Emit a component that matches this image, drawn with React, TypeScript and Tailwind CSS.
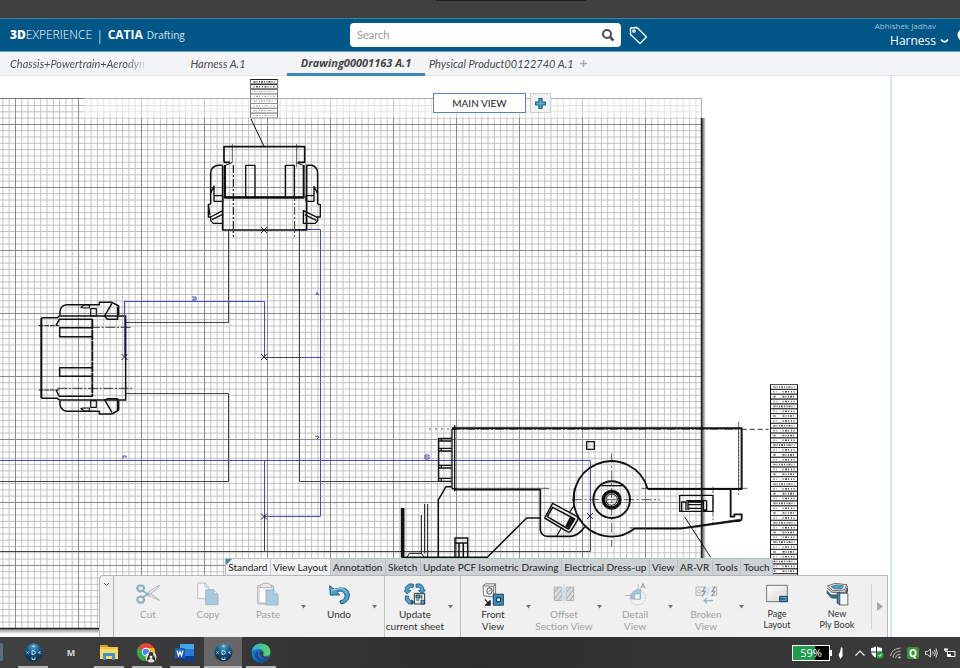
import type { ReactNode } from "react";

const MINOR_X = Array.from({ length: 112 }, (_, i) => 2.9 + i * 6.3).filter((x) => x < 701);
const MINOR_Y = Array.from({ length: 84 }, (_, i) => 105.5 + i * 6.3).filter((y) => y < 627);
const MAJOR_X = Array.from({ length: 11 }, (_, i) => 15.5 + i * 63);
const MAJOR_Y = Array.from({ length: 9 }, (_, i) => 124.5 + i * 63);

function Cross({ x, y }: { x: number; y: number }) {
  return <path d={`M${x - 3} ${y - 3}l6 6m0-6l-6 6`} stroke="#222" strokeWidth="1" />;
}

function SheetGrid() {
  return (
    <g>
      <rect x="0" y="628" width="705" height="6" fill="url(#shadowY)" />
      <rect x="702" y="118" width="4" height="514" fill="url(#shadowX)" />
      <rect x="-2" y="98" width="704" height="530" fill="#fff" />
      <g stroke="#c2c2c2" strokeWidth="1">
        {MINOR_X.map((x) => (
          <path key={x} d={`M${x} 99V628`} />
        ))}
        {MINOR_Y.map((y) => (
          <path key={y} d={`M0 ${y}H702`} />
        ))}
      </g>
      <g stroke="#8b8b8b" strokeWidth="1">
        {MAJOR_X.map((x) => (
          <path key={x} d={`M${x} 99V628`} />
        ))}
        {MAJOR_Y.map((y) => (
          <path key={y} d={`M0 ${y}H702`} />
        ))}
      </g>
      <rect x="84" y="99" width="617" height="19" fill="#fff" opacity=".55" />
      <path d="M84 98.500H702M701.500 98V118" stroke="#b0b0b0" />
      <path d="M0 98.500H84" stroke="#777" />
      <path d="M701.500 118V628.500H0" stroke="#222" strokeWidth="1.500" fill="none" />
    </g>
  );
}

function Wires() {
  return (
    <g fill="none">
      <g stroke="#444">
        <path d="M125 322.500H228.500V230M125 393.500H228.500V481.500H0M299.500 230V481.500H440M264 357.500H299M264.500 516V552M0 551.500H590.500V516" />
      </g>
      <g stroke="#4a4ab8">
        <path d="M124.500 357V301.500H264.500V357M294 229.500H320.500V516.500H264.500V460.500M299 357.500H322M0 460.500H590.500V516" />
        <path d="M192 297h4v3h-4m1-1l2 0M316 293l3 2m-3 0l2-3M315 436l4 1-2 2M123 459v-3h3v2M425 459v-4h4v4zm0-2h3" />
      </g>
      <Cross x={264} y={230} />
      <Cross x={264} y={357} />
      <Cross x={124.5} y={357} />
      <Cross x={264} y={516.5} />
      <Cross x={590} y={516} />
    </g>
  );
}

function TopConnector() {
  return (
    <g transform="translate(190 70) scale(.3333)" fill="none" stroke="#111" strokeWidth="4.500" strokeLinejoin="round">
      <path d="M183 147L222 229" strokeWidth="3" />
      <path d="M102 277V230H344V280M102 277H120M344 277H324M98 287V480H350V287" strokeWidth="5" />
      <path d="M105 285V383H341V285" strokeWidth="6" />
      <path d="M104 380H344" strokeWidth="3" />
      <path d="M102 288L126 278M344 288L320 278" strokeWidth="3" />
      <path d="M167 380V286H195V380M286 380V286H313V380" strokeWidth="4" />
      <path d="M98 286H84Q62 290 62 310V402M348 286H366Q383 292 383 310V402" />
      <path d="M62 370L72 348V394H98M74 377H98V394M383 370L372 350V394H348M370 377H348V394" strokeWidth="4" />
      <path d="M62 403H55V441H62V452L70 460H98M62 441L98 422M66 449L98 433M383 403H391V441H383V452L376 460H340V422L383 443M379 451L344 434M55 403L60 436" strokeWidth="4" />
      <path d="M127 222V278M320 222V292" strokeWidth="2" />
      <path d="M130 285V500" strokeWidth="3.500" strokeDasharray="24 6 6 6" />
      <path d="M314 285V500" strokeWidth="2.500" strokeDasharray="24 6 6 6" />
    </g>
  );
}

function LeftConnector() {
  return (
    <g transform="translate(20 280) scale(.3333)" fill="none" stroke="#111" strokeWidth="4.500" strokeLinejoin="round">
      <path d="M64 114V354" strokeWidth="6" />
      <path d="M64 113H112L118 108H317M64 355H112L118 360H317M317 106V362" />
      <path d="M108 137L118 118H218M108 330L118 349H218" />
      <path d="M217 118V350" strokeWidth="5.500" strokeDasharray="30 2" />
      <path d="M218 143H119V170H218M218 263H119V289H218" />
      <path d="M120 106V94Q122 76 140 74H238V67H276L296 78V106M120 362V374Q124 392 140 394H238V402H276L296 390V362" />
      <path d="M276 70L254 108L262 118H293V80M276 397L254 360L264 356H293V390" />
      <path d="M183 82L193 75H208V84H190ZM212 86H229V108H212ZM183 386L193 393H208V384H190ZM212 362H229V382H212Z" strokeWidth="3.500" />
      <path d="M56 137H118M56 330H118" strokeWidth="3" strokeDasharray="14 3" />
      <path d="M118 142H336M112 325H336" strokeWidth="2.500" strokeDasharray="30 5 6 5" />
      <path d="M314 62V232" stroke="#4a4ab8" strokeWidth="3" />
    </g>
  );
}

function Housing() {
  return (
    <g fill="none" stroke="#111" strokeLinejoin="round">
      <g transform="translate(380 410) scale(.3333)" strokeWidth="4.500">
        <path d="M216 56V236M224 46V244" strokeWidth="4" />
        <path d="M216 56H230M216 236H230" />
        <path d="M222 239H481V360Q483 378 503 379H572Q594 378 614 351" strokeWidth="5" />
        <path d="M222 235H508" strokeWidth="2" />
        <path d="M148 57H222" strokeWidth="3" strokeDasharray="4 14" />
        <path d="M215 85H176V214H215M176 93H215M176 115H215M176 123H215M176 166H215M176 174H215M176 205H215M184 85V93M184 115V123M184 166V174M184 205V214" strokeWidth="4" />
        <path d="M216 230H198L175 270V441M64 442H322L440 324H481" />
        <path d="M68 294V441" strokeWidth="11" />
        <path d="M134 282V430M143 282V442M124 315V430M82 441L88 430H124L132 441" strokeWidth="3" />
        <path d="M225 441V384H263V441M225 399H263M237 399V441M250 399V441" />
        <path d="M518 280L592 320Q596 326 592 332L572 364Q568 368 562 365L494 324Z M518 292L584 327L565 357L502 320Z" />
        <path d="M578 322L562 352M582 325L566 356M573 320L558 350" strokeWidth="5" />
        <path d="M530 379L545 352M568 308L584 284M583 235V275" strokeWidth="3.500" />
        <path d="M620 95H643V118H620Z" strokeWidth="4" />
      </g>
      <g transform="translate(580 370) scale(.3333)" strokeWidth="4">
        <path d="M-384 175H485V357H203" strokeWidth="6" />
        <path d="M-384 178H476V360" strokeWidth="2" strokeDasharray="26 6 5 6" />
        <path d="M485 178H566" strokeWidth="2.500" strokeDasharray="16 8" />
        <path d="M476 155V375" strokeWidth="2" strokeDasharray="26 6 5 6" />
        <path d="M184 355H502" strokeWidth="2" />
        <path d="M203 357A113 113 0 1 0 163 476H302L466 453Q485 454 485 446V433H463V440H452V360" strokeWidth="5.500" />
        <path d="M150 474H305L480 448" strokeWidth="2.500" />
        <circle cx="95" cy="389" r="55" strokeWidth="6" />
        <path d="M64 347H126" strokeWidth="4" />
        <circle cx="95" cy="389" r="25" strokeWidth="10" />
        <circle cx="95" cy="389" r="17" strokeWidth="3" />
        <path d="M95 250V530M-24 389H240" strokeWidth="2" strokeDasharray="30 8 6 8" />
        <path d="M299 376H399V424H299ZM305 422V396H318V420M324 420V396H370V420M324 404H366M324 415H366M380 392V420H370M380 392H318" />
        <path d="M399 350V465" strokeWidth="2" strokeDasharray="20 5 5 5" />
        <path d="M314 441L392 562" strokeWidth="3" />
      </g>
    </g>
  );
}

function NoteTable({ x, y, rows, rowHeight, dark }: { x: number; y: number; rows: number; rowHeight: number; dark: boolean }) {
  const width = 27;
  return (
    <g>
      <rect x={x} y={y} width={width} height={rows * rowHeight} fill="#fff" />
      {Array.from({ length: rows }, (_, i) => {
        const top = y + i * rowHeight;
        const strong = dark || i < 2;
        const long = !dark || i % 4 === 0;
        return (
          <g key={i} stroke={strong ? "#222" : "#888"} fill="none">
            <path d={`M${x} ${top}h${width}v${rowHeight}h-${width}z`} strokeWidth={dark || i >= 2 ? 0.8 : 1.1} />
            <path
              d={long ? `M${x + 3} ${top + rowHeight / 2}h${width - 6}` : `M${x + 3} ${top + rowHeight / 2}h3m6 0h${width - 15}`}
              strokeWidth={strong ? 1.6 : 1.2}
              strokeDasharray={i % 2 ? "1 1.500 2 1 1 2" : "2 1 1 1.500 1 1"}
              opacity=".75"
            />
          </g>
        );
      })}
      <path d={`M${x} ${y}v${rows * rowHeight}m${width} 0v-${rows * rowHeight}`} stroke={dark ? "#111" : "#777"} />
    </g>
  );
}

function DrawingSheet() {
  return (
    <svg className="absolute left-0 top-0 max-w-none" width="960" height="561" viewBox="0 76 960 561" aria-label="Drawing sheet">
      <defs>
        <linearGradient id="shadowX" x1="0" x2="1" y1="0" y2="0">
          <stop offset="0" stopColor="#555" />
          <stop offset="1" stopColor="#fff" />
        </linearGradient>
        <linearGradient id="shadowY" x1="0" x2="0" y1="0" y2="1">
          <stop offset="0" stopColor="#777" />
          <stop offset="1" stopColor="#fff" />
        </linearGradient>
      </defs>
      <SheetGrid />
      <path d="M891 76V637" stroke="#c3dfec" strokeWidth="1.500" />
      <Wires />
      <TopConnector />
      <LeftConnector />
      <Housing />
      <NoteTable x={250.5} y={79.5} rows={8} rowHeight={4.8} dark={false} />
      <NoteTable x={770.5} y={384.5} rows={40} rowHeight={4.85} dark />
    </svg>
  );
}

// Toolbar icons

function CutIcon() {
  return (
    <svg width="24" height="20" viewBox="137 85 72 60" fill="none">
      <path d="M170 112L207 88L204 96L176 118ZM170 118L207 134L202 128L176 112Z" fill="#ececec" stroke="#a9adb0" strokeWidth="2.500" />
      <ellipse cx="151" cy="98" rx="10" ry="9" stroke="#8fb3c5" strokeWidth="7" />
      <ellipse cx="151" cy="132" rx="10" ry="9" stroke="#8fb3c5" strokeWidth="7" />
      <path d="M158 106L172 116L158 124" stroke="#8fb3c5" strokeWidth="5" />
    </svg>
  );
}

function CopyIcon() {
  return (
    <svg width="22" height="24" viewBox="323 80 66 72" fill="none" strokeWidth="2.500">
      <path d="M325 83H347L359 95V130H325ZM347 83V95H359" fill="#f5f5f5" stroke="#b4b4b4" />
      <path d="M349 103H373L386 116V148H349Z" fill="#a9cbdc" stroke="#8fb3c5" />
      <path d="M373 103V116H386" fill="#dcebf2" stroke="#8fb3c5" />
    </svg>
  );
}

function PasteIcon() {
  return (
    <svg width="22" height="24" viewBox="506 80 66 72" fill="none" strokeWidth="2.500">
      <rect x="508" y="90" width="48" height="56" rx="5" fill="#d9d9d9" stroke="#a8a8a8" />
      <path d="M514 97H550V140H514Z" fill="#fafafa" />
      <path d="M516 97V90L525 84H540L549 90V97Z" fill="#e8e8e8" stroke="#a8a8a8" />
      <path d="M533 104H556L569 117V149H533Z" fill="#a9cbdc" stroke="#8fb3c5" />
      <path d="M556 104V117H569" fill="#dcebf2" stroke="#8fb3c5" />
    </svg>
  );
}

function UndoIcon() {
  return (
    <svg width="21" height="21" viewBox="719 86 64 62">
      <path d="M721 90L723 119L752 118L743 110Q760 101 767 116Q772 132 752 137L756 146Q783 140 781 115Q774 88 735 101Z" fill="#4ba3cc" stroke="#1f5878" strokeWidth="3" strokeLinejoin="round" />
      <path d="M725 105L752 98Q768 98 774 112" stroke="#9ed4ec" strokeWidth="3" fill="none" />
    </svg>
  );
}

function UpdateIcon() {
  return (
    <svg width="22" height="22" viewBox="76 85 66 66" strokeLinejoin="round">
      <path d="M80 107V98L90 88H104V98H96L90 104V108H97L85 118L77 108ZM112 88H126L135 98V106H140L131 117L119 107H126V103L121 98H112ZM80 124H90V132L96 138H103V148H90L80 137Z" fill="#4ba3cc" stroke="#1f5878" strokeWidth="2.500" />
      <path d="M97 134L106 143L97 150Z" fill="#1f5878" />
      <path d="M107 116H138V148H107Z" fill="#dfeaf0" stroke="#333" strokeWidth="3" />
      <path d="M112 121H124V130H112ZM129 120V133M112 136H122M127 137H138V148H127Z" fill="#4ba3cc" stroke="#234" strokeWidth="2.500" />
    </svg>
  );
}

function FrontViewIcon() {
  return (
    <svg width="22" height="23" viewBox="305 80 68 70" strokeLinejoin="round">
      <path d="M308 88L316 82H347L341 90V123L310 119ZM341 90L347 82V114L341 123M308 88L341 90" fill="#eee" stroke="#777" strokeWidth="3" />
      <ellipse cx="328" cy="104" rx="8" ry="10" fill="#fff" stroke="#444" strokeWidth="3" />
      <path d="M325 108L332 100" stroke="#444" strokeWidth="2.500" />
      <path d="M340 114H371V148H340Z" fill="#3b91bf" stroke="#17405a" strokeWidth="3" />
      <circle cx="356" cy="131" r="7" fill="#cfe9f5" stroke="#17405a" strokeWidth="4" />
      <path d="M314 130L326 144M330 134V148H316Z" fill="#222" stroke="#222" strokeWidth="4" />
    </svg>
  );
}

function OffsetIcon() {
  return (
    <svg width="22" height="22" viewBox="519 84 68 66" fill="none">
      <path d="M523 96H546V137H523ZM560 96H583V137H560Z" fill="#dcdcdc" stroke="#a8a8a8" strokeWidth="2.500" />
      <path d="M523 112L538 96M523 132L546 103M534 137L546 121M560 112L574 96M560 132L583 103M571 137L583 121" stroke="#a0a0a0" strokeWidth="3" />
      <path d="M546 96H560V137H546Z" fill="#d3e5ee" />
      <path d="M553 86V146" stroke="#a7c7d6" strokeWidth="2" strokeDasharray="10 3 3 3" />
    </svg>
  );
}

function DetailIcon() {
  return (
    <svg width="23" height="23" viewBox="734 82 68 70" fill="none">
      <path d="M736 120H756M776 84V100" stroke="#bbb" strokeWidth="3" />
      <path d="M754 131V125Q756 102 784 100V131Z" fill="#9fc6da" stroke="#86aec2" strokeWidth="2" />
      <path d="M765 131V120Q768 112 782 114V131Z" fill="#e8f1f6" stroke="#86aec2" strokeWidth="2" />
      <circle cx="775" cy="126" r="23" stroke="#b5b5b5" strokeWidth="2.500" strokeDasharray="5 4" />
      <path d="M784 98L791 84L798 98M787 94H796" stroke="#999" strokeWidth="3" />
    </svg>
  );
}

function BrokenIcon() {
  return (
    <svg width="23" height="22" viewBox="106 84 70 66" fill="none">
      <path d="M134 96H109V121H126M158 96H172V121H154" stroke="#b0b0b0" strokeWidth="3" />
      <circle cx="119" cy="109" r="5" stroke="#b0b0b0" strokeWidth="3" />
      <path d="M138 97H154L148 121H132Z" fill="#cfe8f3" />
      <path d="M138 94L129 109H137L128 124M167 94L158 109H166L157 124" stroke="#9a9a9a" strokeWidth="4" />
      <path d="M161 137H136M142 129L134 137L142 145" stroke="#8db9cd" strokeWidth="4" />
    </svg>
  );
}

function PageLayoutIcon() {
  return (
    <svg width="22" height="20" viewBox="323 88 66 60">
      <defs>
        <linearGradient id="pageFill" x1="0" x2="1" y1="0" y2="1">
          <stop offset="0" stopColor="#fff" />
          <stop offset="1" stopColor="#d5d5d5" />
        </linearGradient>
      </defs>
      <path d="M325 92H387V141H325Z" fill="url(#pageFill)" stroke="#777" strokeWidth="3" />
      <path d="M364 125H387V141H364Z" fill="#4b9cc4" stroke="#1f4258" strokeWidth="3" />
      <path d="M364 133H380" stroke="#1f4258" strokeWidth="3" />
    </svg>
  );
}

function PlyBookIcon() {
  return (
    <svg width="23" height="24" viewBox="504 80 68 72" strokeLinejoin="round">
      <path d="M507 106L518 119H562L568 99V108L560 128H520L507 114Z" fill="#3c7695" stroke="#2c3e48" strokeWidth="2.500" />
      <path d="M507 98L522 111H562L568 92" fill="#ddd" stroke="#444" strokeWidth="2.500" />
      <path d="M508 92L530 84L566 88L558 104L524 106Z" fill="#e4e4e4" stroke="#555" strokeWidth="2.500" />
      <path d="M518 94L534 89L556 91L551 100H528Z" fill="#4ba3cc" stroke="#2c6582" strokeWidth="2" />
      <path d="M537 113L545 110V149L537 143Z" fill="#3c8fb8" stroke="#1f4258" strokeWidth="2.500" />
      <path d="M545 114H569V149H545Z" fill="#f7f7f7" stroke="#555" strokeWidth="2.500" />
    </svg>
  );
}

type Tool = { label: string; icon: ReactNode; muted?: boolean; menu?: boolean; small?: boolean };

const CLIPBOARD_TOOLS: Tool[] = [
  { label: "Cut", icon: <CutIcon />, muted: true },
  { label: "Copy", icon: <CopyIcon />, muted: true },
  { label: "Paste", icon: <PasteIcon />, muted: true, menu: true },
  { label: "Undo", icon: <UndoIcon />, menu: true },
];

const VIEW_TOOLS: Tool[] = [
  { label: "Front\nView", icon: <FrontViewIcon />, menu: true },
  { label: "Offset\nSection View", icon: <OffsetIcon />, muted: true, menu: true },
  { label: "Detail\nView", icon: <DetailIcon />, muted: true, menu: true },
  { label: "Broken\nView", icon: <BrokenIcon />, muted: true, menu: true },
  { label: "Page\nLayout", icon: <PageLayoutIcon />, small: true },
  { label: "New\nPly Book", icon: <PlyBookIcon />, small: true },
];

function ToolButton({ label, icon, muted, menu, small }: Tool) {
  return (
    <>
      <button className="flex w-[60px] flex-none flex-col items-center pt-1.5">
        <span className="flex h-6 items-center">{icon}</span>
        <span
          className={`mt-0.5 whitespace-pre text-center font-['Lato',sans-serif] ${small ? "text-[9px] leading-[11px]" : "text-[10px] leading-[12px]"} ${muted ? "text-[#a3a3a3]" : "text-[#333]"}`}
        >
          {label}
        </span>
      </button>
      {menu && (
        <button aria-label={`${label} options`} className="flex w-[11px] flex-none items-center justify-center">
          <svg width="5" height="4" viewBox="0 0 5 4">
            <path d="M0 0H5L2.500 3.500Z" fill="#777" />
          </svg>
        </button>
      )}
    </>
  );
}

const SECTIONS = [
  "Standard",
  "View Layout",
  "Annotation",
  "Sketch",
  "Update PCF Isometric Drawing",
  "Electrical Dress-up",
  "View",
  "AR-VR",
  "Tools",
  "Touch",
];

function ActionBar() {
  return (
    <div className="absolute bottom-0 left-[99px] right-[72px]">
      <nav className="relative ml-[126px] mr-[115px] flex h-[17px] justify-between border-t border-l border-[#b5bcbe] bg-[#cdd3d4] font-['Lato',sans-serif]">
        <svg className="absolute left-0 top-0" width="6" height="6">
          <path d="M0 0H6L0 6Z" fill="#3a86b4" />
        </svg>
        {SECTIONS.map((name, i) => (
          <button
            key={name}
            className={`grow whitespace-nowrap border-r text-[10px] leading-[16px] text-[#222] ${i < 2 ? "border-[#c5c9cb] bg-[#f1f1f2]" : "border-[#bac1c3]"}`}
          >
            {name}
          </button>
        ))}
      </nav>
      <div className="flex h-[62px] rounded-tl border border-b-0 border-[#b4b8ba] bg-[#f0f0f1]">
        <button aria-label="Collapse" className="flex w-[14px] flex-none justify-center border-r border-[#b4b8ba] pt-1.5">
          <svg width="7" height="5" viewBox="0 0 7 5" fill="none">
            <path d="M1 1L3.500 3.500L6 1" stroke="#666" />
          </svg>
        </button>
        <div className="ml-1 flex">
          {CLIPBOARD_TOOLS.map((t) => (
            <ToolButton key={t.label} {...t} />
          ))}
        </div>
        <div className="mx-1 flex border-l border-[#c2c5c7]">
          <ToolButton label={"Update\ncurrent sheet"} icon={<UpdateIcon />} menu />
        </div>
        <div className="flex border-l border-[#b9bcbe] pl-0.5">
          {VIEW_TOOLS.map((t) => (
            <ToolButton key={t.label} {...t} />
          ))}
        </div>
        <button aria-label="More tools" className="my-2 ml-1 flex grow items-center justify-center border-l border-[#d0d0d0]">
          <svg width="6" height="9" viewBox="0 0 6 9">
            <path d="M0 0L6 4.500L0 9Z" fill="#a5a5a5" />
          </svg>
        </button>
      </div>
    </div>
  );
}

function Header() {
  return (
    <header className="flex h-[34px] flex-none items-center border-y border-t-[#3f7f9f] border-b-[#6f9db5] bg-[#005686] text-white">
      <div className="flex w-[350px] flex-none items-center pl-2.5 text-[12px]">
        <b className="font-extrabold">3D</b>
        <span className="font-light">EXPERIENCE</span>
        <span className="mx-1 text-[14px] font-light">|</span>
        <b>CATIA</b>
        <span className="ml-1 text-[10px] text-[#d5e5ee]">Drafting</span>
      </div>
      <div className="flex h-6 w-[271px] items-center rounded-sm bg-white pl-[7px] pr-1.5">
        <input aria-label="Search" placeholder="Search" className="min-w-0 grow font-['Lato',sans-serif] text-[11px] text-[#333] outline-none placeholder:text-[#9a9a9a]" />
        <button aria-label="Run search">
          <svg width="14" height="14" viewBox="0 0 14 14" fill="none" stroke="#4a4a4a">
            <circle cx="6" cy="6" r="4" strokeWidth="2" />
            <path d="M9 9L12.500 12.500" strokeWidth="2.500" />
          </svg>
        </button>
      </div>
      <button aria-label="Tags" className="ml-2">
        <svg width="19" height="19" viewBox="0 0 19 19" fill="none" stroke="#fff" strokeWidth="1.300" strokeLinejoin="round">
          <path d="M1.500 2L8 1.500L17.500 11L11 17.500L1.500 8.500Z" />
          <circle cx="5" cy="5" r="1.200" />
        </svg>
      </button>
      <div className="ml-auto flex items-end">
        <div className="flex flex-col items-end">
          <span className="text-[8px] leading-[12px] text-[#9fc3d6]">Abhishek Jadhav</span>
          <button className="text-[12px] leading-[18px]">Harness</button>
        </div>
        <svg className="mb-1.5 ml-1" width="9" height="6" viewBox="0 0 9 6" fill="none">
          <path d="M1 1.500Q4.500 6 8 1.500" stroke="#fff" strokeWidth="1.800" />
        </svg>
        <svg className="mb-2 ml-2" width="3" height="14" viewBox="0 0 3 14">
          <circle cx="7" cy="7" r="6.500" fill="#fff" />
        </svg>
      </div>
    </header>
  );
}

function DocumentTabs() {
  return (
    <nav className="flex h-6 flex-none items-stretch border-b border-[#e0e3e5] bg-[#f3f4f6] font-['Lato',sans-serif] text-[11px] italic leading-[22px] text-[#4a4a4a]">
      <button className="w-[149px] whitespace-nowrap pl-2.5 text-left">
        <span className="inline-block bg-gradient-to-r from-[#4a4a4a] from-85% to-[#ddd] bg-clip-text text-transparent">
          Chassis+Powertrain+Aerodyn
        </span>
      </button>
      <button className="w-[138px]">Harness A.1</button>
      <button className="-mb-px w-[138px] whitespace-nowrap border-b-[3px] border-[#3f88b5] font-['Open_Sans',sans-serif] font-bold leading-[22px] text-[#444]">
        Drawing00001163 A.1
      </button>
      <button className="ml-1 whitespace-nowrap">Physical Product00122740 A.1</button>
      <button aria-label="New tab" className="ml-1.5 flex items-center">
        <svg width="7" height="7" viewBox="0 0 7 7">
          <path d="M3.500 0V7M0 3.500H7" stroke="#aaa" strokeWidth="1.500" />
        </svg>
      </button>
    </nav>
  );
}

// Windows taskbar

function CompassIcon() {
  return (
    <svg width="19" height="19" viewBox="0 0 19 19">
      <defs>
        <radialGradient id="compass" cx=".5" cy=".15" r=".8">
          <stop offset="0" stopColor="#5aa7cf" />
          <stop offset=".45" stopColor="#1b5b87" />
          <stop offset="1" stopColor="#06304f" />
        </radialGradient>
      </defs>
      <circle cx="9.500" cy="9.500" r="9" fill="url(#compass)" />
      <path d="M8 7.500V11.500Q11.500 11.500 11.500 9.500Q11.500 7.500 8 7.500ZM8 14.500V16.500H11V14.500M2.500 8.500L4.500 10.500M4.500 8.500L2.500 10.500M16.500 8.500L14.500 9.500L16.500 10.500M8.500 4L9.500 2.500L10.500 4" fill="none" stroke="#c5e2f2" strokeWidth="1" />
    </svg>
  );
}

function FolderIcon() {
  return (
    <svg width="18" height="17" viewBox="0 0 18 17">
      <path d="M0 1H7L8.500 3H18V15H0Z" fill="#f5c14d" />
      <path d="M0 1H7L8 3H0Z" fill="#d99b2b" />
      <path d="M0 5H18V15H0Z" fill="#fcd86b" />
      <path d="M3 9H15V16H12V12H6V16H3Z" fill="#3f93c9" />
    </svg>
  );
}

function ChromeIcon() {
  return (
    <svg width="20" height="20" viewBox="0 0 20 20">
      <circle cx="9" cy="9" r="9" fill="#e8453c" />
      <path d="M9 9L1.200 4.500A9 9 0 0 0 9 18L13 11Z" fill="#34a853" />
      <path d="M9 5H17A9 9 0 0 1 9 18L13 11Z" fill="#fbbc05" />
      <circle cx="9" cy="9" r="4.200" fill="#fff" />
      <circle cx="9" cy="9" r="3.300" fill="#4285f4" />
      <circle cx="14" cy="14" r="5.500" fill="#e3dccf" />
      <path d="M10 18Q10 13 12 12Q11 9 14 9Q17 9 16 12Q19 14 18 18L14 15Z" fill="#333" />
      <circle cx="14" cy="14" r="1.500" fill="#eee" />
    </svg>
  );
}

function WordIcon() {
  return (
    <svg width="20" height="18" viewBox="0 0 20 18">
      <rect x="5" y="0" width="14" height="17" rx="1" fill="#2b7cd3" />
      <path d="M5 0H19V5H5Z" fill="#41a5ee" />
      <path d="M5 12H19V17H5Z" fill="#103f91" />
      <rect x="0" y="4" width="10" height="10" rx="1" fill="#185abd" />
      <path d="M2 6.500L3.500 11.500L5 7.500L6.500 11.500L8 6.500" fill="none" stroke="#fff" strokeWidth="1.200" />
    </svg>
  );
}

function EdgeIcon() {
  return (
    <svg width="20" height="20" viewBox="0 0 20 20">
      <defs>
        <linearGradient id="edgeTop" x1="0" x2="1">
          <stop offset="0" stopColor="#2aa9e0" />
          <stop offset="1" stopColor="#5fd65c" />
        </linearGradient>
      </defs>
      <circle cx="10" cy="10" r="9.500" fill="#1479c9" />
      <path d="M0.600 9Q2 0.500 10 0.500Q19 1 19.500 9Q19 13.500 14 13Q11 12.500 12.500 10.500Q13 6 8 6Q3 6 .6 9Z" fill="url(#edgeTop)" />
      <path d="M7 9Q6 17 17 16.500Q13 20.500 8 19Q3 16 4 11Q5 8 8 8Z" fill="#0f4f9e" />
      <path d="M8 9Q10 7.500 12 9Q13 10 12 11.500Q12 14 16 14Q18 14 19 13L17.500 16Q9 17 8 9Z" fill="#3f3f3f" />
    </svg>
  );
}

const APPS: { name: string; icon: ReactNode; open?: boolean; active?: boolean }[] = [
  { name: "3DEXPERIENCE", icon: <CompassIcon />, open: true },
  { name: "Mail", icon: <span className="text-[9px] font-bold text-[#d5d5d5]">M</span> },
  { name: "File Explorer", icon: <FolderIcon />, open: true },
  { name: "Chrome", icon: <ChromeIcon />, open: true },
  { name: "Word", icon: <WordIcon />, open: true },
  { name: "CATIA", icon: <CompassIcon />, open: true, active: true },
  { name: "Edge", icon: <EdgeIcon />, open: true },
];

function Taskbar() {
  return (
    <footer className="flex h-[31px] flex-none bg-gradient-to-r from-[#404040] via-[#2e2e2e] to-[#3c3c3c]">
      <div className="mr-[11px] mt-1.5 h-[18px] w-[3px] bg-[#54707a]" />
      {APPS.map((app) => (
        <button
          key={app.name}
          aria-label={app.name}
          className={`relative flex w-[38px] items-center justify-center ${app.active ? "bg-[#666]" : ""}`}
        >
          {app.icon}
          {app.open && <span className={`absolute bottom-0 h-0.5 bg-[#b5b5b5] ${app.active ? "inset-x-0" : "inset-x-1"}`} />}
        </button>
      ))}
      <div className="ml-auto flex items-center gap-1.5 text-white">
        <div className="flex items-center">
          <div className="flex h-4 w-[38px] items-center justify-center border border-white bg-gradient-to-r from-[#1f9c4c] from-60% to-black to-60% text-[11px] leading-none">
            59%
          </div>
          <span className="h-1.5 w-0.5 bg-white" />
        </div>
        <svg className="mr-1.5" width="5" height="12" viewBox="0 0 5 12">
          <path d="M3 0L4.500 1V9L2.500 12L.5 8L2 5Z" fill="#fff" />
        </svg>
        <svg width="10" height="6" viewBox="0 0 10 6" fill="none">
          <path d="M.5 5.500L5 1L9.500 5.500" stroke="#fff" strokeWidth="1.200" />
        </svg>
        <svg width="13" height="13" viewBox="0 0 13 13">
          <path d="M0 2Q3 2 5.500 0Q8 2 11 2V6Q10 10 5.500 12Q1 10 0 6Z" fill="#fff" />
          <path d="M5.500 0V12M0 6H11" stroke="#333" />
          <circle cx="9" cy="9" r="3.500" fill="#1f9c4c" />
          <path d="M7.500 9L8.700 10.300L10.600 8" stroke="#fff" fill="none" />
        </svg>
        <svg width="11" height="12" viewBox="0 0 11 12" fill="none" stroke="#bbb">
          <path d="M.5 9Q2 1.500 10.500 1M3 10.500Q4 4.500 10.500 4M5.500 11Q6 7.500 10.500 7" />
          <circle cx="9.500" cy="10.500" r=".8" fill="#fff" />
        </svg>
        <span className="flex h-3 w-3 items-center justify-center rounded-xs bg-[#3c9639] text-[10px] font-bold leading-none">Q</span>
        <svg width="13" height="10" viewBox="0 0 13 10" fill="none" stroke="#ddd">
          <path d="M.5 3.500H2.500L5.500 1V9L2.500 6.500H.5Z" />
          <path d="M7.500 3.500Q8.500 5 7.500 6.500M9.500 2Q11 5 9.500 8M11 .5Q13.500 5 11 9.500" />
        </svg>
        <svg className="mr-1" width="12" height="10" viewBox="0 0 12 10" fill="none" stroke="#fff">
          <path d="M3.500 3.500H11V8.500H3.500ZM0 1.500H4M1 0V3Q2 4.500 3 3V0" />
          <path d="M4 6H7V8H4Z" fill="#fff" stroke="none" />
        </svg>
      </div>
    </footer>
  );
}

export default function App() {
  return (
    <div className="flex h-screen flex-col overflow-hidden bg-white font-['Open_Sans',sans-serif]">
      <div className="flex h-[18px] flex-none justify-center bg-[#404040]">
        <div className="ml-[62px] h-px w-[150px] bg-[#222]" />
      </div>
      <Header />
      <DocumentTabs />
      <main className="relative grow overflow-hidden">
        <DrawingSheet />
        <div className="absolute left-[433px] top-[17px] flex items-center gap-1">
          <button className="h-5 w-[93px] border border-[#5b83b4] bg-white font-['Lato',sans-serif] text-[10px] text-[#222]">MAIN VIEW</button>
          <button aria-label="Add view" className="flex h-5 w-[21px] items-center justify-center border border-[#cfcfcf] bg-[#f1f1f1]">
            <svg width="11" height="11" viewBox="0 0 11 11">
              <path d="M4 .7H7V4H10.300V7H7V10.300H4V7H.7V4H4Z" fill="#4fb3d9" stroke="#1f5f80" strokeWidth="1.200" />
            </svg>
          </button>
        </div>
        <ActionBar />
      </main>
      <Taskbar />
    </div>
  );
}
